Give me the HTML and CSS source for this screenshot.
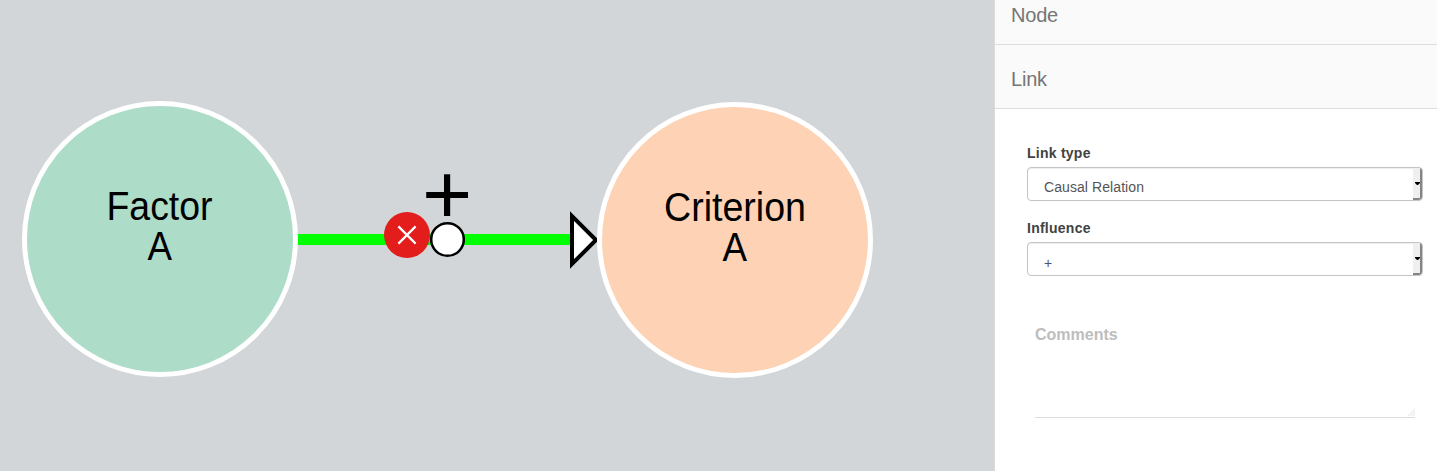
FILE: index.html
```html
<!DOCTYPE html>
<html lang="en">
<head>
<meta charset="utf-8">
<title>Causal map</title>
<link rel="stylesheet" href="styles.css">
</head>
<body>
<div class="app">
  <main class="canvas">
    <svg class="graph" width="994" height="471" viewBox="0 0 994 471">
      <line class="link" x1="290" y1="239.5" x2="572" y2="239.5"/>
      <path class="arrow" d="M572 216V264L596 240Z"/>
      <g class="node">
        <circle class="factor" cx="160" cy="239" r="135.5"/>
        <text x="159.5" y="219.5" textLength="106" lengthAdjust="spacingAndGlyphs">Factor</text>
        <text x="159.7" y="259.5" textLength="24.5" lengthAdjust="spacingAndGlyphs">A</text>
      </g>
      <g class="node">
        <circle class="criterion" cx="735" cy="240" r="135.5"/>
        <text x="735" y="220.5" textLength="142" lengthAdjust="spacingAndGlyphs">Criterion</text>
        <text x="734.7" y="260.5" textLength="24.5" lengthAdjust="spacingAndGlyphs">A</text>
      </g>
      <text class="sign" x="447" y="224">+</text>
      <circle class="remove" cx="407" cy="235" r="23"/>
      <path class="cross" d="M398.4 226.4L415.6 243.6M415.6 226.4L398.4 243.6"/>
      <circle class="handle" cx="447.5" cy="239.5" r="16.3"/>
    </svg>
  </main>
  <aside class="panel">
    <h2 class="section first">Node</h2>
    <h2 class="section">Link</h2>
    <div class="form">
      <div class="label">Link type</div>
      <div class="select"><span class="value">Causal Relation</span><span class="drop"><svg width="5" height="4" viewBox="0 0 5 4"><path d="M0 0H5V1L3 3H2L0 1Z"/></svg></span></div>
      <div class="label">Influence</div>
      <div class="select"><span class="value plus">+</span><span class="drop"><svg width="5" height="4" viewBox="0 0 5 4"><path d="M0 0H5V1L3 3H2L0 1Z"/></svg></span></div>
      <div class="comments">Comments<svg class="grip" width="8" height="8" viewBox="0 0 8 8"><path d="M8 0V8H0V7H1V6H2V5H4V3H5V2H6V1H7V0Z"/></svg></div>
    </div>
  </aside>
</div>
</body>
</html>
```
FILE: styles.css
```css
* { box-sizing: border-box; }
body {
  margin: 0;
  font-family: "Liberation Sans", Arial, sans-serif;
  font-size: 14px;
  overflow: hidden;
}
.app { display: flex; height: 471px; }
.canvas { width: 994px; flex: none; background: #d2d6d9; }
.graph { display: block; }
.link { stroke: #0f0; stroke-width: 11; }
.arrow { fill: #fff; stroke: #000; stroke-width: 4; }
.node circle { stroke: #fff; stroke-width: 5; }
.factor { fill: #addcc8; }
.criterion { fill: #fdd2b5; }
.node text { font-size: 40px; text-anchor: middle; }
.sign { font-size: 86px; text-anchor: middle; }
.remove { fill: #e31d1c; }
.cross { stroke: #fff; stroke-width: 2.2; fill: none; }
.handle { fill: #fff; stroke: #000; stroke-width: 2.5; }

.panel { flex: 1; background: #fff; border-left: 1px solid #dcdcdc; }
.section {
  margin: 0;
  height: 64px;
  padding: 4px 16px 0;
  line-height: 60px;
  font-size: 20px;
  font-weight: normal;
  letter-spacing: -.2px;
  color: #757575;
  background: #fafafa;
  border-bottom: 1px solid #ddd;
}
.first { height: 45px; padding-top: 0; line-height: 30px; }
.form { padding: 34px 14px 0 32px; }
.label {
  height: 24px;
  line-height: 21px;
  font-weight: bold;
  letter-spacing: .25px;
  color: #424242;
}
.select {
  display: flex;
  justify-content: space-between;
  height: 34px;
  margin-bottom: 17px;
  padding-left: 16px;
  border: 1px solid #c4c4c4;
  border-radius: 4px;
  box-shadow: inset 0 1px 1px rgba(0, 0, 0, .075);
  overflow: hidden;
}
.value { line-height: 38px; letter-spacing: .08px; color: #555; }
.plus { line-height: 40px; color: #44546e; }
.drop {
  display: flex;
  align-items: center;
  justify-content: flex-end;
  width: 9px;
  background: #efefed;
  border-right: 2px solid #858585;
  border-bottom: 2px solid #858585;
  border-radius: 0 0 3px 0;
}
.drop svg { margin-top: 2px; }
.comments {
  position: relative;
  height: 95px;
  margin: 47px 8px 0 8px;
  line-height: 24px;
  font-size: 16px;
  font-weight: bold;
  color: #bdbdbd;
  border-bottom: 1px solid #ddd;
}
.grip { position: absolute; right: 0; bottom: 1px; fill: #f3f3f3; }
```
